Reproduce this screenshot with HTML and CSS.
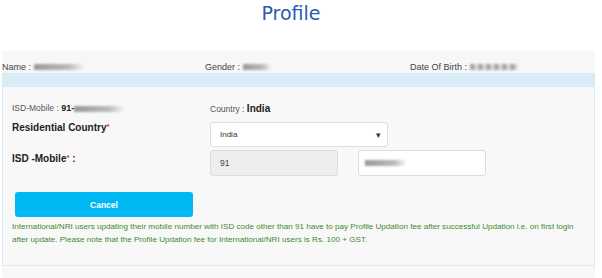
FILE: index.html
```html
<!DOCTYPE html>
<html lang="en">
  <head>
    <meta charset="UTF-8" />
    <meta name="viewport" content="width=device-width, initial-scale=1.0" />
    <title>Profile</title>
    <link rel="stylesheet" href="styles.css">
  </head>
  <body>
    <h1 class="title">Profile</h1>

    <div class="band">
      <div class="info-row">
        <div class="info">Name : <span class="blur blur-name"></span></div>
        <div class="info">Gender : <span class="blur blur-gender"></span></div>
        <div class="info">Date Of Birth : <span class="blur blur-dob"></span></div>
      </div>

      <div class="panel">
        <div class="panel-head"></div>
        <div class="panel-body">
          <div class="row row-top">
            <div class="label-col small">ISD-Mobile : <b>91-</b><span class="blur blur-mobile"></span></div>
            <div class="small">Country : <b class="big">India</b></div>
          </div>

          <div class="row">
            <div class="label-col field-label">Residential Country<span class="req">*</span></div>
            <div class="select">
              <span>India</span>
              <span class="arrow">&#9662;</span>
            </div>
          </div>

          <div class="row">
            <div class="label-col field-label label-low">ISD -Mobile<span class="req">*</span> :</div>
            <div class="input input-disabled">91</div>
            <div class="input input-mobile"><span class="blur blur-input"></span></div>
          </div>

          <button class="btn">Cancel</button>

          <p class="note">
            International/NRI users updating their mobile number with ISD code other than 91 have to pay Profile Updation fee after successful Updation i.e. on first login after update. Please note that the Profile Updation fee for International/NRI users is Rs. 100 + GST.
          </p>
        </div>
      </div>
    </div>
  </body>
</html>
```

FILE: styles.css
```css
body {
  margin: 0;
  padding: 0;
  background-color: #ffffff;
  font-family: "Liberation Sans", Arial, sans-serif;
  color: #333333;
}

.title {
  margin: 0;
  height: 51px;
  padding: 2px 20px 0 0;
  box-sizing: border-box;
  text-align: center;
  font-family: "DejaVu Sans", sans-serif;
  font-weight: normal;
  font-size: 19px;
  color: #2a5cb0;
}

.band {
  margin: 0 7px 0 2px;
  background-color: #f7f7f7;
  padding-bottom: 12px;
}

.info-row {
  display: grid;
  grid-template-columns: 203px 205px 1fr;
  height: 22px;
  align-items: end;
  font-size: 9px;
  color: #444444;
}

.info {
  display: flex;
  align-items: center;
  height: 12px;
}

.blur {
  display: inline-block;
  height: 6px;
  background: linear-gradient(to right, #999999, #bbbbbb 70%, rgba(200, 200, 200, 0));
  filter: blur(0.8px);
  margin-left: 3px;
  vertical-align: middle;
}

.blur-name {
  width: 50px;
}

.blur-gender {
  width: 28px;
}

.blur-dob {
  width: 48px;
  background: repeating-linear-gradient(to right, #aaaaaa 0 5px, #dddddd 5px 8px);
}

.blur-mobile {
  width: 50px;
  margin-left: 0;
}

.blur-input {
  width: 42px;
  margin-left: 0;
}

.panel {
  border: 1px solid #d7ebf5;
  background-color: #f8f8f8;
}

.panel-head {
  height: 13px;
  background-color: #d9edf7;
}

.panel-body {
  padding: 14px 0 19px 9px;
}

.row {
  display: flex;
  align-items: flex-start;
  margin-bottom: 3px;
}

.row-top {
  height: 14px;
  align-items: center;
  margin-bottom: 7px;
}

.label-col {
  width: 198px;
  flex-shrink: 0;
}

.small {
  font-size: 8.5px;
  color: #555555;
}

.small b {
  font-size: 9px;
  color: #222222;
}

.small b.big {
  font-size: 10px;
}

.field-label {
  font-size: 10px;
  font-weight: bold;
  color: #222222;
}

.label-low {
  padding-top: 3px;
}

.req {
  color: #e03030;
  font-size: 8px;
  vertical-align: top;
}

.select {
  width: 178px;
  height: 25px;
  box-sizing: border-box;
  border: 1px solid #dddddd;
  border-radius: 3px;
  background-color: #ffffff;
  display: flex;
  align-items: center;
  justify-content: space-between;
  padding: 0 6px 0 9px;
  font-size: 8px;
  color: #333333;
}

.arrow {
  font-size: 9px;
  color: #333333;
}

.input {
  height: 26px;
  box-sizing: border-box;
  border: 1px solid #dddddd;
  border-radius: 3px;
  display: flex;
  align-items: center;
  padding-left: 9px;
  font-size: 8.5px;
  color: #444444;
}

.input-disabled {
  width: 128px;
  background-color: #eeeeee;
}

.input-mobile {
  width: 128px;
  margin-left: 20px;
  background-color: #ffffff;
  padding-left: 6px;
}

.btn {
  display: block;
  margin: 16px 0 0 3px;
  width: 178px;
  height: 25px;
  border: none;
  border-radius: 3px;
  background-color: #00b9f2;
  color: #ffffff;
  font-family: "Liberation Sans", Arial, sans-serif;
  font-size: 8.5px;
  font-weight: bold;
}

.note {
  margin: 3px 0 0 0;
  padding-right: 10px;
  font-size: 8.1px;
  line-height: 13px;
  color: #3f8a2e;
}
```
